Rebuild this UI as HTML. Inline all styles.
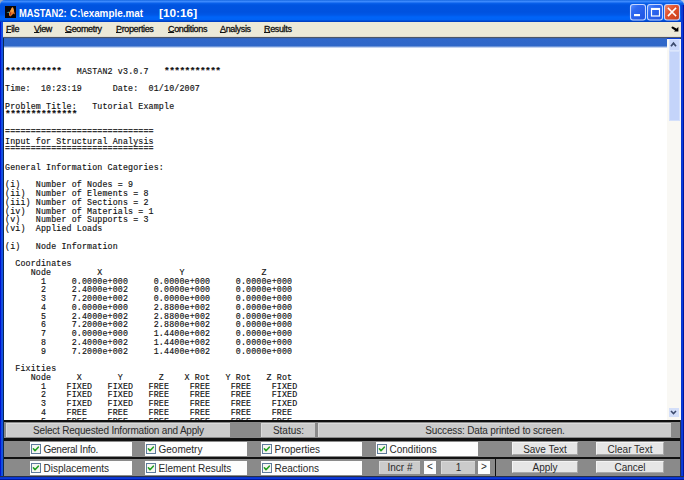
<!DOCTYPE html>
<html><head><meta charset="utf-8">
<style>
*{margin:0;padding:0;box-sizing:border-box}
html,body{width:684px;height:480px;overflow:hidden;background:#0A3FDA;position:relative;font-family:"Liberation Sans",sans-serif}
.a{position:absolute}
#title{left:0;top:0;width:684px;height:22px;border-radius:5px 5px 0 0;
 background:linear-gradient(to bottom,#0A5BD6 0px,#3D8CFF 1px,#3A86FA 2px,#0A62EC 3px,#0054E0 5px,#0052DF 12px,#0058E8 15px,#0064F8 17px,#0062F4 20px,#0040C4 21px,#0040C4 22px)}
.tt{top:6.5px;color:#fff;font-weight:bold;font-size:10.5px;white-space:pre;transform-origin:0 0}

.tb{top:4px;width:16px;height:16px;border:1px solid #E8F0FF;border-radius:3px;background:linear-gradient(135deg,#3C7DFA,#1A54E0)}
#lb{left:0;top:22px;width:3px;height:458px;background:linear-gradient(to right,#0012D0 0px,#0012D0 1px,#1048E0 1px,#1252E2 3px)}
#rb{left:680px;top:22px;width:4px;height:458px;background:linear-gradient(to right,#2A3450 0px,#2A3450 1px,#0830C8 1px,#0A3CDA 2px,#0A3CDA 3px,#00149C 3px)}
#bb{left:0;top:476px;width:684px;height:4px;background:linear-gradient(to bottom,#283048 0px,#283048 1px,#0A2EC0 1px,#0A3ADA 2px,#0A3ADA 3px,#0018A0 3px)}
#menu{left:3px;top:22px;width:678px;height:15px;background:#ECE9D8}
#menuline{left:3px;top:37px;width:678px;height:1px;background:#4A566A;box-shadow:0 -1px 0 #E2DCCF}
pre b{font-weight:bold;font-size:9.5px;letter-spacing:-0.57px;position:relative;top:0px}
pre b.e{font-size:8.3px;letter-spacing:0.15px;top:-1px;color:#333;-webkit-text-stroke:0.15px #333}
u{text-decoration:underline;text-underline-offset:0px}
.mi{top:1.7px;font-size:9px;letter-spacing:-0.35px;color:#111;white-space:pre;-webkit-text-stroke:0.3px #111}
#band{left:4px;top:38px;width:663px;height:10px;background:linear-gradient(to bottom,#3A62B0 0px,#3068CA 1.5px,#2F67C8 8px,#A8C0E8 9px,#E0E8F8 10px)}
#dl{left:3px;top:38px;width:1px;height:438px;background:#0A2A50}
#text{left:4px;top:48px;width:663px;height:372px;background:#fff;overflow:hidden}
pre{position:absolute;left:1px;top:2px;font-family:"Liberation Mono",monospace;font-size:8.3px;letter-spacing:0.15px;line-height:8.75px;color:#111;-webkit-text-stroke:0.15px #111}
#sb{left:667px;top:39px;width:13.5px;height:381px;background:#F9F8F4;border-top:1px solid #EEF2FC}
#thumb{left:668.5px;top:50.5px;width:11px;height:70px;background:#C4D4FA;border:1px solid #D4E0FB}
#up{left:668.5px;top:39px;width:11px;height:11.5px;background:#CAD8FB;border:1px solid #DCE6FC}
#down{left:668.5px;top:408px;width:10px;height:9px;background:#D4DFF9}
#hline{left:4px;top:420px;width:676px;height:2px;background:#0E0E0E}
#panel{left:4px;top:422px;width:676px;height:54px;background:#8A8A8A}
.dk{background:#111}
.lg{background:#CBCBCB;border-top:1px solid #DADADA;border-left:1px solid #DADADA;font-size:10px;color:#2A2A2A;text-align:center;line-height:13px;white-space:pre}
.wb{background:#FDFDFD;font-size:10px;color:#2A2A2A;white-space:pre;line-height:14px}
.cb{position:absolute;left:1px;top:2px}
.lbl{position:absolute;left:13.5px;top:1px}
.bt{background:#E6E6E6;border-top:1px solid #F4F4F4;border-left:1px solid #F4F4F4;border-right:1px solid #A8A8A8;border-bottom:1px solid #A8A8A8;font-size:10px;color:#2A2A2A;text-align:center;line-height:14px;white-space:pre}
</style></head><body>
<div class="a" style="left:0;top:0;width:6px;height:6px;background:#9AAAC4"></div><div class="a" style="left:678px;top:0;width:6px;height:6px;background:#B8C8E4"></div>
<div class="a" id="title"></div>
<svg class="a" style="left:5px;top:6px" width="11" height="12" viewBox="0 0 11 12"><rect width="11" height="12" fill="#0A0606"/><path d="M1.5 7 L4 5.5 L5 6.5 Z" fill="#3FC8C8"/><path d="M4 7.5 L7 1.5 L8 1.5 L10 8.5 L8.5 7.5 L5.5 10.5 L4.2 9.5 Z" fill="#E8782A"/><path d="M7 1.5 L8 1.5 L9 5 L7.5 6 L5 9 L4.2 9.5 L4 7.5 Z" fill="#F6A040"/><path d="M4.5 8 L6 5 L6.5 7 L5 10 Z" fill="#B83A18"/></svg>
<div class="a tt" style="left:19px;transform:scaleX(0.89)">MASTAN2:</div><div class="a tt" style="left:70px;transform:scaleX(0.94)">C:\example.mat</div><div class="a tt" style="left:159px;transform:scaleX(1.125)">[10:16]</div>
<svg class="a" style="left:629px;top:3px" width="52" height="18" viewBox="0 0 52 18">
<defs>
<linearGradient id="gb" x1="0" y1="0" x2="1" y2="1"><stop offset="0" stop-color="#5C92FF"/><stop offset="0.3" stop-color="#2F6AF2"/><stop offset="1" stop-color="#1E52E0"/></linearGradient>
<linearGradient id="gr" x1="0" y1="0" x2="1" y2="1"><stop offset="0" stop-color="#F08A6C"/><stop offset="0.4" stop-color="#E2542F"/><stop offset="1" stop-color="#C83D18"/></linearGradient>
</defs>
<rect x="1.5" y="1.5" width="15" height="15.5" rx="2.5" fill="url(#gb)" stroke="#C6D6FF" stroke-width="1.1"/>
<rect x="5" y="11" width="6" height="2.2" fill="#fff"/>
<rect x="18.5" y="1.5" width="15" height="15.5" rx="2.5" fill="url(#gb)" stroke="#C6D6FF" stroke-width="1.1"/>
<rect x="22.5" y="5.5" width="8" height="7.5" fill="none" stroke="#fff" stroke-width="1.2"/>
<rect x="22" y="5" width="9" height="2" fill="#fff"/>
<rect x="35.5" y="1.5" width="15" height="15.5" rx="2.5" fill="url(#gr)" stroke="#C6D6FF" stroke-width="1.1"/>
<path d="M39.5 5.5 L46.5 12.5 M46.5 5.5 L39.5 12.5" stroke="#fff" stroke-width="1.6" stroke-linecap="square"/>
</svg>

<div class="a" style="left:681px;top:5px;width:3px;height:17px;background:linear-gradient(to right,#0A3ED8 0px,#0838D0 2px,#0018A8 2px)"></div>
<div class="a" id="lb"></div>
<div class="a" id="rb"></div>
<div class="a" id="bb"></div>
<div class="a" id="menu">
 <div class="a mi" style="left:3px"><u>F</u>ile</div>
 <div class="a mi" style="left:31px"><u>V</u>iew</div>
 <div class="a mi" style="left:62px"><u>G</u>eometry</div>
 <div class="a mi" style="left:113px"><u>P</u>roperties</div>
 <div class="a mi" style="left:165px"><u>C</u>onditions</div>
 <div class="a mi" style="left:217px"><u>A</u>nalysis</div>
 <div class="a mi" style="left:261px"><u>R</u>esults</div>
</div>
<div class="a" id="menuline"></div>
<svg class="a" style="left:670px;top:25px" width="10" height="8" viewBox="0 0 10 8"><path d="M2.6 2.6 L6.2 4.8" stroke="#000" stroke-width="2.2" stroke-linecap="round"/><path d="M8.4 1.8 L8.4 6.4 L4 6.4 Z" fill="#000"/></svg>
<div class="a" id="band"></div>
<div class="a" id="dl"></div>
<div class="a" id="text"><pre>


<b>***********</b>   MASTAN2 v3.0.7   <b>***********</b>

Time:  10:23:19      Date:  01/10/2007

Problem Title:   Tutorial Example
<b>**************</b>

<b class="e">=============================</b>
Input for Structural Analysis
<b class="e">=============================</b>

General Information Categories:

(i)   Number of Nodes = 9
(ii)  Number of Elements = 8
(iii) Number of Sections = 2
(iv)  Number of Materials = 1
(v)   Number of Supports = 3
(vi)  Applied Loads

(i)   Node Information

  Coordinates
     Node         X               Y               Z
       1     0.0000e+000     0.0000e+000     0.0000e+000
       2     2.4000e+002     0.0000e+000     0.0000e+000
       3     7.2000e+002     0.0000e+000     0.0000e+000
       4     0.0000e+000     2.8800e+002     0.0000e+000
       5     2.4000e+002     2.8800e+002     0.0000e+000
       6     7.2000e+002     2.8800e+002     0.0000e+000
       7     0.0000e+000     1.4400e+002     0.0000e+000
       8     2.4000e+002     1.4400e+002     0.0000e+000
       9     7.2000e+002     1.4400e+002     0.0000e+000

  Fixities
     Node     X       Y       Z    X Rot   Y Rot   Z Rot
       1    FIXED   FIXED   FREE    FREE    FREE    FIXED
       2    FIXED   FIXED   FREE    FREE    FREE    FIXED
       3    FIXED   FIXED   FREE    FREE    FREE    FIXED
       4    FREE    FREE    FREE    FREE    FREE    FREE
       5    FREE    FREE    FREE    FREE    FREE    FREE
</pre></div>
<div class="a" id="sb"></div>
<div class="a" id="thumb"></div>
<div class="a" id="up"></div>
<div class="a" id="down"></div>
<svg class="a" style="left:669px;top:39px" width="11" height="11" viewBox="0 0 11 11"><path d="M2 7.3 L4.5 4.2 L7 7.3" stroke="#3B4A6C" stroke-width="1.7" fill="none"/></svg>
<svg class="a" style="left:669px;top:408px" width="10" height="9" viewBox="0 0 10 9"><path d="M2 3 L4.5 5.6 L7 3" stroke="#3B4A6C" stroke-width="1.5" fill="none"/></svg>
<div class="a" id="hline"></div>
<div class="a" id="panel"></div>
<!-- row 0 -->
<div class="a lg" style="left:6px;top:423px;width:224px;height:14px;letter-spacing:-0.2px">Select Requested Information and Apply</div>
<div class="a lg" style="left:261px;top:423px;width:54px;height:14px">Status:</div>
<div class="a lg" style="left:318px;top:423px;width:353px;height:14px;letter-spacing:-0.16px">Success: Data printed to screen.</div>
<div class="a dk" style="left:4px;top:438px;width:676px;height:3px"></div>
<!-- row 1 -->
<div class="a wb" style="left:30px;top:442px;width:102px;height:14px"><svg class="cb" width="10" height="10" viewBox="0 0 10 10"><rect x="0.5" y="0.5" width="9" height="9" fill="#F6F6F2" stroke="#5F7C9C"/><path d="M2.4 4.8 L4 6.7 L7.3 3.2" stroke="#24A024" stroke-width="1.6" fill="none" stroke-linecap="round" stroke-linejoin="round"/></svg><span class="lbl" style="letter-spacing:-0.25px">General Info.</span></div>
<div class="a wb" style="left:145px;top:442px;width:102px;height:14px"><svg class="cb" width="10" height="10" viewBox="0 0 10 10"><rect x="0.5" y="0.5" width="9" height="9" fill="#F6F6F2" stroke="#5F7C9C"/><path d="M2.4 4.8 L4 6.7 L7.3 3.2" stroke="#24A024" stroke-width="1.6" fill="none" stroke-linecap="round" stroke-linejoin="round"/></svg><span class="lbl">Geometry</span></div>
<div class="a wb" style="left:261px;top:442px;width:101px;height:14px"><svg class="cb" width="10" height="10" viewBox="0 0 10 10"><rect x="0.5" y="0.5" width="9" height="9" fill="#F6F6F2" stroke="#5F7C9C"/><path d="M2.4 4.8 L4 6.7 L7.3 3.2" stroke="#24A024" stroke-width="1.6" fill="none" stroke-linecap="round" stroke-linejoin="round"/></svg><span class="lbl">Properties</span></div>
<div class="a wb" style="left:376px;top:442px;width:102px;height:14px"><svg class="cb" width="10" height="10" viewBox="0 0 10 10"><rect x="0.5" y="0.5" width="9" height="9" fill="#F6F6F2" stroke="#5F7C9C"/><path d="M2.4 4.8 L4 6.7 L7.3 3.2" stroke="#24A024" stroke-width="1.6" fill="none" stroke-linecap="round" stroke-linejoin="round"/></svg><span class="lbl">Conditions</span></div>
<div class="a bt" style="left:512px;top:442px;width:66px;height:13px">Save Text</div>
<div class="a bt" style="left:596px;top:442px;width:68px;height:13px">Clear Text</div>
<div class="a dk" style="left:4px;top:457px;width:676px;height:2px"></div>
<!-- row 2 -->
<div class="a wb" style="left:30px;top:461px;width:102px;height:14px"><svg class="cb" width="10" height="10" viewBox="0 0 10 10"><rect x="0.5" y="0.5" width="9" height="9" fill="#F6F6F2" stroke="#5F7C9C"/><path d="M2.4 4.8 L4 6.7 L7.3 3.2" stroke="#24A024" stroke-width="1.6" fill="none" stroke-linecap="round" stroke-linejoin="round"/></svg><span class="lbl">Displacements</span></div>
<div class="a wb" style="left:145px;top:461px;width:102px;height:14px"><svg class="cb" width="10" height="10" viewBox="0 0 10 10"><rect x="0.5" y="0.5" width="9" height="9" fill="#F6F6F2" stroke="#5F7C9C"/><path d="M2.4 4.8 L4 6.7 L7.3 3.2" stroke="#24A024" stroke-width="1.6" fill="none" stroke-linecap="round" stroke-linejoin="round"/></svg><span class="lbl">Element Results</span></div>
<div class="a wb" style="left:261px;top:461px;width:101px;height:14px"><svg class="cb" width="10" height="10" viewBox="0 0 10 10"><rect x="0.5" y="0.5" width="9" height="9" fill="#F6F6F2" stroke="#5F7C9C"/><path d="M2.4 4.8 L4 6.7 L7.3 3.2" stroke="#24A024" stroke-width="1.6" fill="none" stroke-linecap="round" stroke-linejoin="round"/></svg><span class="lbl">Reactions</span></div>
<div class="a lg" style="left:379px;top:461px;width:41px;height:13px;line-height:12px">Incr #</div>
<div class="a wb" style="left:424px;top:461px;width:12px;height:13px;text-align:center;line-height:12px">&lt;</div>
<div class="a lg" style="left:441px;top:461px;width:34px;height:13px;line-height:12px">1</div>
<div class="a wb" style="left:478px;top:461px;width:12px;height:13px;text-align:center;line-height:12px">&gt;</div>
<div class="a dk" style="left:495px;top:459px;width:1px;height:17px"></div>
<div class="a bt" style="left:512px;top:461px;width:66px;height:12px;line-height:12px">Apply</div>
<div class="a bt" style="left:596px;top:461px;width:68px;height:12px;line-height:12px">Cancel</div>
</body></html>
